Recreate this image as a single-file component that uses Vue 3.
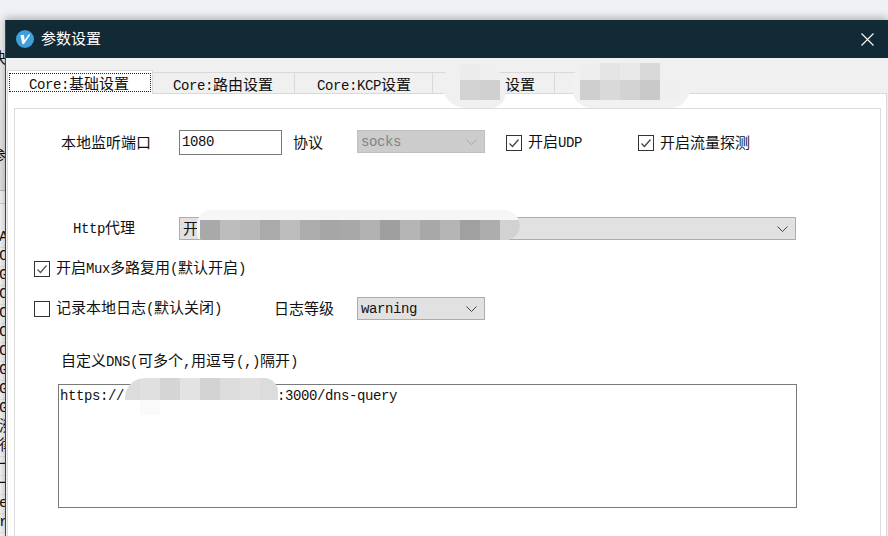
<script setup>
const behindRows = ['A', 'C', 'G', 'C', 'C', 'C', 'C', 'G', 'G', 'G', '澇', '律', '一', '一', 'e', 'r']

const tabs = [
  { id: 'base', latin: 'Core:', cjk: '基础设置', cls: 'tab-1' },
  { id: 'route', latin: 'Core:', cjk: '路由设置', cls: 'tab-2' },
  { id: 'kcp', latin: 'Core:KCP', cjk: '设置', cls: 'tab-3' },
  { id: 'x', latin: '', cjk: '设置', cls: 'tab-4' },
  { id: 'y', latin: '', cjk: '', cls: 'tab-5' }
]

const blurs = [
  {
    cls: 'blur-tab-a',
    rows: [
      ['transparent', '#ececec', '#efefef'],
      ['transparent', '#d3d3d3', '#d0d0d0']
    ]
  },
  {
    cls: 'blur-tab-b',
    rows: [
      ['#eeeeee', '#e5e5e5', '#e9e9e9', '#d9d9d9', '#f0f0f0'],
      ['#cfcfcf', '#d9d9d9', '#d3d3d3', '#c9c9c9', '#efefef']
    ]
  },
  {
    cls: 'blur-http',
    rows: [
      ['#a9a9a9', '#bdbdbd', '#b8b8b8', '#aaaaaa', '#bdbdbd', '#adadad', '#a6a6a6', '#a8a8a8', '#b2b2b2', '#9f9f9f', '#b5b5b5', '#a8a8a8', '#b5b5b5', '#a0a0a0', '#adadad', '#d2d2d2']
    ]
  },
  {
    cls: 'blur-dns',
    rows: [
      ['#dcdcdc', '#e0e0e0', '#d5d5d5', '#e3e3e3', '#d2d2d2', '#dcdcdc', '#e0e0e0', '#dcdcdc'],
      ['transparent', '#fafafa']
    ]
  }
]
</script>

<template>
  <div class="desk">
    <div class="behind">
      <div class="behind-top">
        <span class="behind-glyph g-1">快</span>
        <span class="behind-glyph g-2">参</span>
      </div>
      <div class="behind-gap"></div>
      <div v-for="(row, i) in behindRows" :key="i" class="behind-row">{{ row }}</div>
    </div>

    <section class="window">
      <header class="titlebar">
        <svg class="logo" width="18" height="18" viewBox="0 0 18 18" aria-hidden="true">
          <circle cx="9" cy="9" r="9" fill="#3e9fdc" />
          <path d="M4.4 5.2 L8 4.8 L8.6 10.2 L12.6 4.4 L14.4 4.6 L8 14 L6.4 14 Z" fill="#fff" />
        </svg>
        <span class="title">参数设置</span>
        <svg class="close" width="13" height="13" viewBox="0 0 13 13" aria-hidden="true">
          <path d="M.5.5 12.5 12.5M12.5.5.5 12.5" stroke="#fff" stroke-width="1.1" fill="none" />
        </svg>
      </header>

      <nav class="tabs">
        <div v-for="(tab, i) in tabs" :key="tab.id" class="tab" :class="[tab.cls, { active: i === 0 }]">
          <span class="tab-label"><span class="l">{{ tab.latin }}</span>{{ tab.cjk }}</span>
        </div>
      </nav>

      <div class="panel">
        <div class="group">
          <div class="row row-port">
            <span class="lbl lbl-port">本地监听端口</span>
            <input class="field" value="1080" />
            <span class="lbl lbl-proto">协议</span>
            <div class="select disabled short">
              <span class="l">socks</span>
              <svg class="chev" width="11" height="6" viewBox="0 0 11 6"><path d="M.5.5 5.5 5.5 10.5.5" fill="none" stroke="#a8a8a8" /></svg>
            </div>
            <span class="check udp">
              <svg width="16" height="16" viewBox="0 0 16 16"><path d="M3.5 8.5 6.5 11.5 12.5 4.5" fill="none" stroke="#444" stroke-width="1.3" /></svg>
            </span>
            <span class="lbl check-text">开启<span class="l">UDP</span></span>
            <span class="check sniff">
              <svg width="16" height="16" viewBox="0 0 16 16"><path d="M3.5 8.5 6.5 11.5 12.5 4.5" fill="none" stroke="#444" stroke-width="1.3" /></svg>
            </span>
            <span class="lbl check-text">开启流量探测</span>
          </div>

          <div class="row row-http">
            <span class="lbl lbl-http"><span class="l">Http</span>代理</span>
            <div class="select wide">
              <span class="lbl">开</span>
              <svg class="chev" width="11" height="6" viewBox="0 0 11 6"><path d="M.5.5 5.5 5.5 10.5.5" fill="none" stroke="#444" /></svg>
            </div>
          </div>

          <div class="row row-mux">
            <span class="check">
              <svg width="16" height="16" viewBox="0 0 16 16"><path d="M3.5 8.5 6.5 11.5 12.5 4.5" fill="none" stroke="#555" stroke-width="1.3" /></svg>
            </span>
            <span class="lbl check-text">开启<span class="l">Mux</span>多路复用<span class="l">(</span>默认开启<span class="l">)</span></span>
          </div>

          <div class="row row-log">
            <span class="check"></span>
            <span class="lbl check-text log-text">记录本地日志<span class="l">(</span>默认关闭<span class="l">)</span></span>
            <span class="lbl log-level">日志等级</span>
            <div class="select short">
              <span class="l">warning</span>
              <svg class="chev" width="11" height="6" viewBox="0 0 11 6"><path d="M.5.5 5.5 5.5 10.5.5" fill="none" stroke="#444" /></svg>
            </div>
          </div>

          <div class="row row-dns">
            <span class="lbl">自定义<span class="l">DNS(</span>可多个<span class="l">,</span>用逗号<span class="l">(,)</span>隔开<span class="l">)</span></span>
          </div>

          <div class="textarea"><span class="l">https://<span class="gap"></span>:3000/dns-query</span></div>
        </div>
      </div>
    </section>

    <div v-for="blur in blurs" :key="blur.cls" class="blur" :class="blur.cls">
      <div v-for="(row, r) in blur.rows" :key="r" class="blur-row">
        <i v-for="(color, c) in row" :key="c" class="tile" :style="{ background: color }"></i>
      </div>
    </div>
  </div>
</template>

<style>
html, body { margin: 0; padding: 0; background: #f0f1f4; }
</style>

<style scoped>
.desk {
  position: relative;
  width: 888px;
  height: 536px;
  overflow: hidden;
  background: #f0f1f4;
  font-family: "Noto Sans CJK SC", "Liberation Mono", monospace;
  font-size: 15px;
  color: #111;
}
.l {
  font-family: "Liberation Mono", "Noto Sans CJK SC", monospace;
  font-size: 14px;
  letter-spacing: -0.4px;
}

/* window behind */
.behind {
  display: flex;
  flex-direction: column;
  width: 5px;
  padding-top: 33px;
  overflow: hidden;
}
.behind-top {
  position: relative;
  height: 157px;
  flex: none;
  background: linear-gradient(#f0f0f0, #dedede);
}
.behind-glyph {
  position: absolute;
  left: -9px;
  line-height: 14px;
}
.g-1 { top: 17px; }
.g-2 { top: 115px; }
.behind-gap {
  box-sizing: border-box;
  height: 39px;
  flex: none;
  background: linear-gradient(#f1f1f1 12px, #d0d0d0 12px, #d0d0d0 13px, #f4f4f4 13px);
  border-top: 1px solid #b5b5b5;
}
.behind-row {
  flex: none;
  height: 18px;
  line-height: 18px;
  width: 14px;
  border-bottom: 1px solid #e4e4e4;
  background: #f4f4f4;
  font-size: 15px;
  margin-left: -1px;
  font-family: "Liberation Mono", "Noto Sans CJK SC", monospace;
}

/* window */
.window {
  position: absolute;
  left: 5px;
  top: 20px;
  width: 883px;
  height: 516px;
  display: flex;
  flex-direction: column;
  box-sizing: border-box;
  border-left: 1px solid #2f4854;
  background: #f0f0f0;
  box-shadow: 0 -2px 8px rgba(0, 0, 0, .28);
}
.titlebar {
  flex: none;
  height: 38px;
  display: flex;
  align-items: center;
  padding: 0 14px 0 10px;
  background: #122a36;
  color: #fff;
}
.logo { flex: none; }
.title { margin-left: 7px; font-size: 15px; line-height: 36px; padding-bottom: 2px; }
.close { margin-left: auto; }

.tabs {
  flex: none;
  display: flex;
  align-items: flex-end;
  height: 24px;
  margin-top: 12px;
  padding-left: 1px;
  position: relative;
  z-index: 1;
  margin-bottom: -1px;
}
.tab {
  position: relative;
  box-sizing: border-box;
  height: 22px;
  border-top: 1px solid #d9d9d9;
  border-right: 1px solid #d9d9d9;
  border-bottom: 1px solid #d9d9d9;
  background: #f0f0f0;
  line-height: 22px;
  white-space: nowrap;
}
.tab-label { display: block; }
.tab-1 { width: 146px; }
.tab-2 { width: 142px; padding-left: 20px; }
.tab-3 { width: 138px; padding-left: 22px; }
.tab-4 { width: 122px; padding-left: 72px; }
.tab-5 { width: 125px; }
.tab.active {
  height: 24px;
  border: 1px solid #d9d9d9;
  border-bottom: 0;
  background: #fff;
  padding: 2px 1px 0 1px;
}
.tab.active .tab-label {
  box-sizing: border-box;
  height: 19px;
  line-height: 17px;
  padding-left: 19px;
  border: 1px dotted #222;
}

.panel {
  flex: 1;
  min-height: 0;
  box-sizing: border-box;
  margin: 0 0 0 1px;
  width: 880px;
  padding: 14px 5px 0 6px;
  background: #fff;
  border: 1px solid #d9d9d9;
  border-bottom: 0;
}
.group {
  height: 100%;
  box-sizing: border-box;
  border: 1px solid #dcdcdc;
  border-bottom: 0;
  overflow: hidden;
}

.row {
  display: flex;
  align-items: center;
  white-space: pre;
}
.lbl { line-height: 16px; padding-bottom: 2px; }
.row-port { margin-top: 21px; height: 25px; padding-left: 46px; }
.lbl-port { width: 118px; flex: none; }
.field {
  flex: none;
  box-sizing: border-box;
  width: 103px;
  height: 25px;
  padding: 0 1px 2px 2px;
  margin: 0;
  border: 1px solid #7a7a7a;
  border-radius: 0;
  outline: 0;
  font-family: "Liberation Mono", monospace;
  font-size: 14px;
  letter-spacing: -0.4px;
  color: #111;
  background: #fff;
}
.lbl-proto { width: 64px; flex: none; margin-left: 11px; }
.select {
  position: relative;
  flex: none;
  display: flex;
  align-items: center;
  box-sizing: border-box;
  height: 23px;
  padding: 1px 3px 0;
  background: #e1e1e1;
  border: 1px solid #adadad;
}
.select.short { width: 128px; }
.select.wide { width: 617px; }
.select.disabled {
  background: #cccccc;
  border-color: #bfbfbf;
  color: #838383;
  align-self: flex-start;
}
.chev { margin-left: auto; margin-right: 4px; flex: none; }
.check {
  flex: none;
  box-sizing: border-box;
  display: block;
  width: 16px;
  height: 16px;
  border: 1px solid #333;
  background: #fff;
}
.check svg { display: block; margin: -1px; }
.check.udp { margin-left: 21px; }
.check.sniff { margin-left: 56px; }
.check-text { margin-left: 6px; }

.row-http { margin-top: 62px; height: 23px; padding-left: 58px; }
.lbl-http { width: 106px; flex: none; }
.row-mux { margin-top: 21px; height: 16px; padding-left: 19px; }
.row-log { margin-top: 20px; height: 23px; padding-left: 19px; }
.log-text { width: 166px; flex: none; }
.log-level { flex: none; width: 82px; margin-left: 52px; margin-right: 1px; }
.row-dns { margin-top: 33px; height: 18px; padding-left: 46px; }
.textarea {
  box-sizing: border-box;
  margin: 13px 0 0 43px;
  width: 739px;
  height: 124px;
  border: 1px solid #7a7a7a;
  padding: 0 1px;
  line-height: 18px;
  white-space: nowrap;
  background: #fff;
}
.gap { display: inline-block; width: 153px; }

/* mosaics over sensitive text */
.blur {
  position: absolute;
  z-index: 2;
  box-sizing: border-box;
  display: flex;
  flex-direction: column;
  overflow: hidden;
}
.blur-row { display: flex; flex: none; }
.tile { display: block; flex: none; width: 20px; height: 20px; }
.blur-tab-a {
  left: 442px;
  top: 64px;
  width: 63px;
  height: 44px;
  border-radius: 20px 24px 14px 24px;
  background: #f0f0f0;
}
.blur-tab-a .blur-row:first-child .tile { height: 16px; }
.blur-tab-a .tile:first-child { width: 18px; }
.blur-tab-b {
  left: 572px;
  top: 63px;
  width: 118px;
  height: 45px;
  padding-left: 8px;
  border-radius: 20px;
  background: #f1f1f1;
}
.blur-tab-b .blur-row:first-child .tile { height: 17px; }
.blur-http {
  left: 197px;
  top: 210px;
  width: 323px;
  height: 30px;
  padding: 10px 0 0 3px;
  border-radius: 16px 18px 16px 6px;
  background: #f6f6f6;
}
.blur-dns {
  left: 125px;
  top: 378px;
  width: 153px;
  height: 37px;
}
.blur-dns .blur-row:first-child {
  overflow: hidden;
  border-radius: 20px 14px 0 0;
}
.blur-dns .blur-row:first-child .tile { height: 22px; }
.blur-dns .blur-row:last-child .tile { height: 15px; }
.blur-dns .tile:first-child { width: 15px; }
.blur-dns .blur-row:first-child .tile:last-child { width: 18px; }
</style>
